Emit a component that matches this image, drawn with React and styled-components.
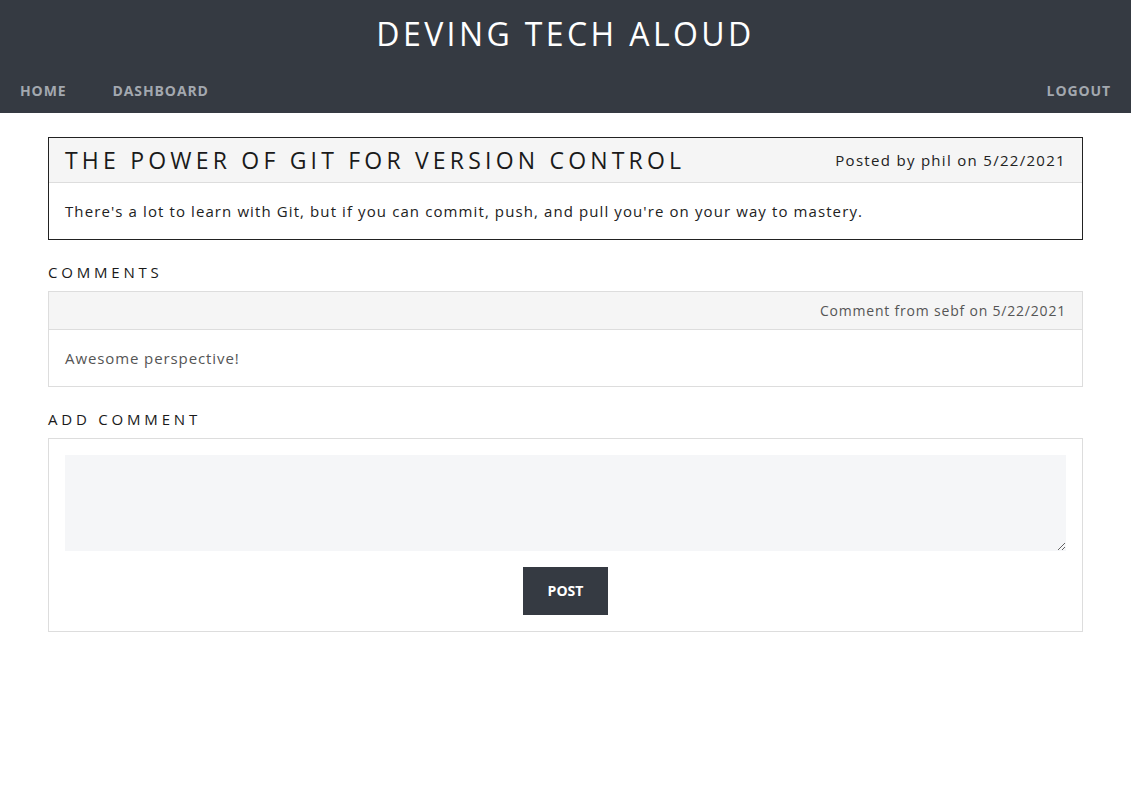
import styled, { createGlobalStyle } from "styled-components";

const GlobalStyle = createGlobalStyle`
  body {
    margin: 0;
    font-family: "Open Sans", "Liberation Sans", sans-serif;
    background: #fff;
    color: #222;
  }
  * { box-sizing: border-box; }
`;

const Header = styled.header`
  background: #353a42;
  height: 113px;
  display: flex;
  flex-direction: column;
  padding: 0 20px;
`;

const SiteTitle = styled.h1`
  margin: 0;
  padding-top: 12px;
  height: 68px;
  text-align: center;
  color: #fff;
  font-size: 32px;
  font-weight: 500;
  letter-spacing: 3.4px;
`;

const Nav = styled.nav`
  display: flex;
  align-items: center;
  height: 45px;
  gap: 46px;
`;

const NavLink = styled.a`
  color: #a3a8af;
  font-size: 14px;
  font-weight: 700;
  letter-spacing: 0.9px;
  text-decoration: none;
  margin-left: ${(p) => (p.$right ? "auto" : "0")};
`;

const Main = styled.main`
  padding: 24px 48px;
  display: flex;
  flex-direction: column;
`;

const Card = styled.section`
  border: 1px solid ${(p) => (p.$dark ? "#222" : "#ddd")};
  margin-bottom: ${(p) => p.$gap || "0"};
`;

const CardHead = styled.div`
  background: #f5f5f5;
  border-bottom: 1px solid #ddd;
  display: flex;
  align-items: center;
  justify-content: space-between;
  height: ${(p) => p.$h};
  padding: 0 16px;
`;

const PostTitle = styled.h2`
  margin: 0;
  font-size: 23px;
  font-weight: 400;
  letter-spacing: 4.2px;
  color: #1a1a1a;
`;

const Meta = styled.span`
  margin-left: auto;
  font-size: ${(p) => p.$size || "15px"};
  letter-spacing: ${(p) => p.$ls || "1.3px"};
  color: ${(p) => p.$color || "#222"};
`;

const CardBody = styled.div`
  padding: ${(p) => p.$pad || "18px 16px"};
  font-size: 15px;
  letter-spacing: ${(p) => p.$ls || "1.1px"};
  color: ${(p) => p.$color || "#222"};
`;

const SectionLabel = styled.h3`
  margin: 0 0 9px;
  font-size: 15px;
  font-weight: 400;
  letter-spacing: 3.8px;
  color: #1a1a1a;
`;

const Form = styled.form`
  border: 1px solid #ddd;
  padding: 16px;
  display: flex;
  flex-direction: column;
  align-items: center;
  gap: 16px;
`;

const TextArea = styled.textarea`
  width: 100%;
  height: 96px;
  border: none;
  background: #f5f6f8;
  font-family: inherit;
  font-size: 15px;
  resize: vertical;
  outline: none;
`;

const Button = styled.button`
  background: #353a42;
  color: #fff;
  border: none;
  width: 85px;
  height: 48px;
  padding-bottom: 2px;
  font-family: inherit;
  font-size: 14px;
  font-weight: 700;
  cursor: pointer;
`;

export default function App() {
  return (
    <>
      <GlobalStyle />
      <Header>
        <SiteTitle>DEVING TECH ALOUD</SiteTitle>
        <Nav>
          <NavLink href="#">HOME</NavLink>
          <NavLink href="#">DASHBOARD</NavLink>
          <NavLink href="#" $right>LOGOUT</NavLink>
        </Nav>
      </Header>
      <Main>
        <Card $dark $gap="22px">
          <CardHead $h="45px">
            <PostTitle>THE POWER OF GIT FOR VERSION CONTROL</PostTitle>
            <Meta>Posted by phil on 5/22/2021</Meta>
          </CardHead>
          <CardBody>
            There's a lot to learn with Git, but if you can commit, push, and pull you're on your way to mastery.
          </CardBody>
        </Card>
        <SectionLabel>COMMENTS</SectionLabel>
        <Card $gap="22px">
          <CardHead $h="38px">
            <Meta $size="14px" $ls="0.8px" $color="#555">Comment from sebf on 5/22/2021</Meta>
          </CardHead>
          <CardBody $pad="18px 16px" $ls="0.9px" $color="#555">Awesome perspective!</CardBody>
        </Card>
        <SectionLabel>ADD COMMENT</SectionLabel>
        <Form onSubmit={(e) => e.preventDefault()}>
          <TextArea />
          <Button type="submit">POST</Button>
        </Form>
      </Main>
    </>
  );
}
